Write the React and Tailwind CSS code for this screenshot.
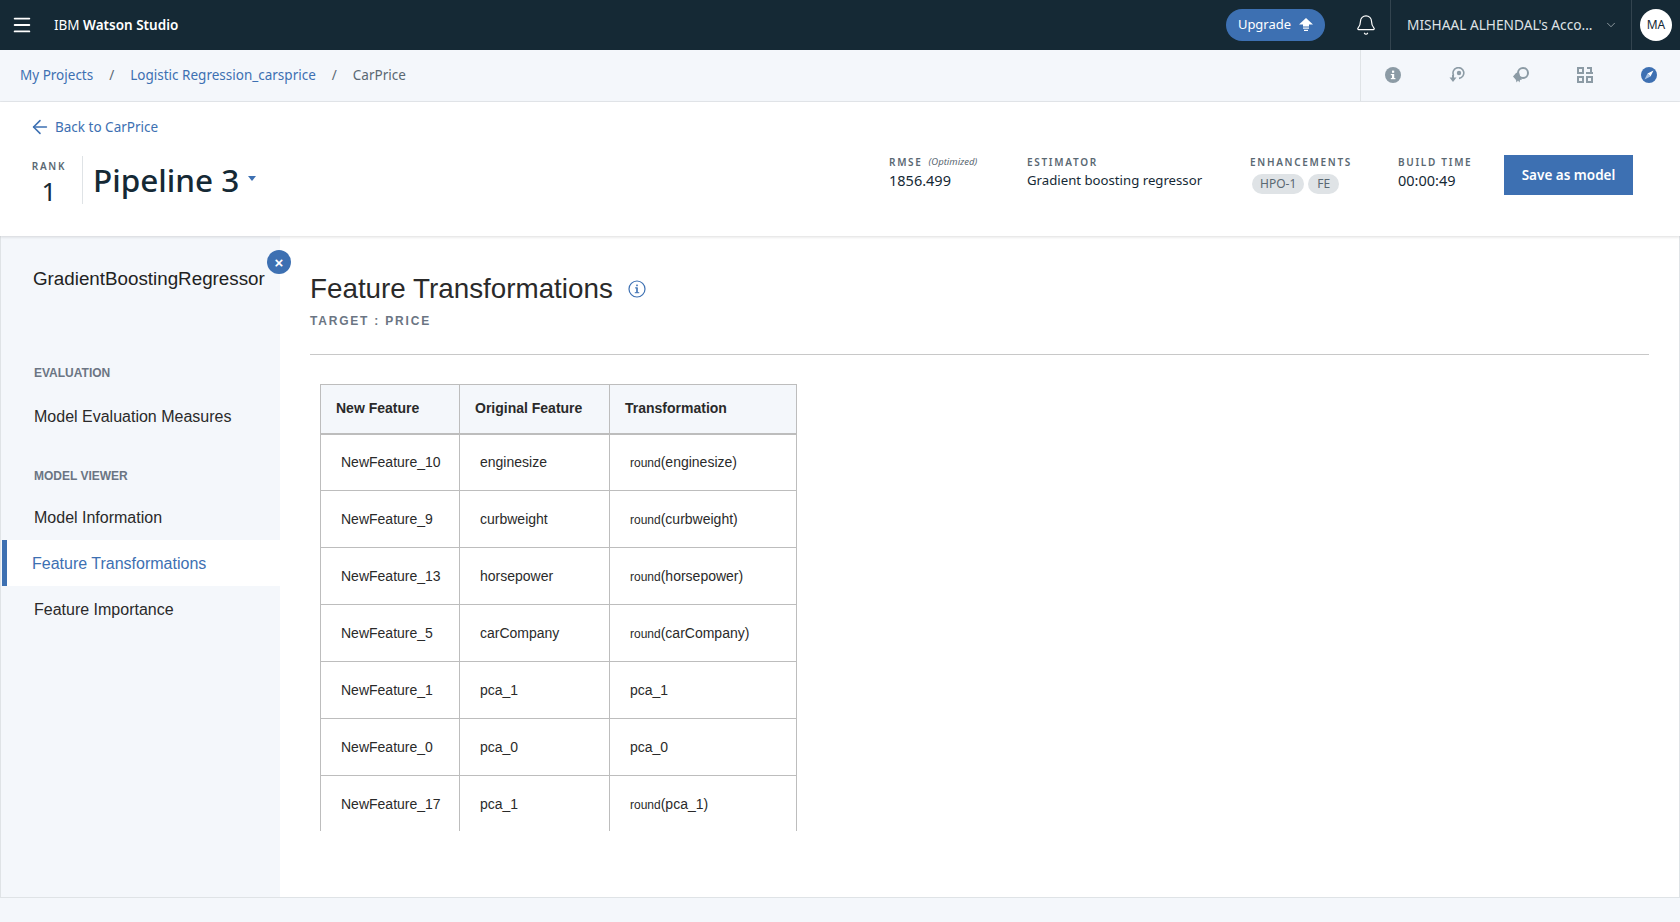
import { ArrowLeft, ChevronDown, Bell, Menu } from 'lucide-react'

const rows = [
    ['NewFeature_10', 'enginesize', 'round', '(enginesize)'],
    ['NewFeature_9', 'curbweight', 'round', '(curbweight)'],
    ['NewFeature_13', 'horsepower', 'round', '(horsepower)'],
    ['NewFeature_5', 'carCompany', 'round', '(carCompany)'],
    ['NewFeature_1', 'pca_1', '', 'pca_1'],
    ['NewFeature_0', 'pca_0', '', 'pca_0'],
    ['NewFeature_17', 'pca_1', 'round', '(pca_1)'],
]

const plex = 'font-["Noto_Sans",sans-serif]'
const helv = 'font-["Liberation_Sans",Arial,sans-serif]'

const ToolIcon = ({ children }) => (
    <svg viewBox="0 0 16 16" className="h-4 w-4">
        {children}
    </svg>
)

const Stat = ({ label, note, className, children }) => (
    <div className={`flex flex-col ${className}`}>
        <div className="flex h-[14px] items-center text-[10px] font-semibold tracking-[0.17em] text-[#5a6872]">
            {label}
            {note && (
                <span className="ml-1.5 text-[9.5px] font-normal italic tracking-normal">
                    {note}
                </span>
            )}
        </div>
        {children}
    </div>
)

const SideItem = ({ children }) => (
    <div className="flex h-[46px] items-center pt-[2px] pl-[33px] text-[16px] text-[#2a2a2a]">
        {children}
    </div>
)

export default function App() {
    return (
        <div className={`${plex} flex h-[922px] w-[1680px] flex-col overflow-hidden bg-[#f4f7fb]`}>
            {/* top bar */}
            <div className="flex h-[50px] shrink-0 items-center bg-[#152935] text-white">
                <Menu className="ml-[11px] h-[22px] w-[22px]" strokeWidth={2} />
                <div className="ml-[21px] text-[13.5px]">
                    IBM <span className="font-semibold">Watson Studio</span>
                </div>
                <div className="ml-auto flex h-8 w-[99px] items-center justify-center gap-2 rounded-full bg-[#3d70b2] text-[13px]">
                    Upgrade
                    <svg viewBox="0 0 14 14" className="h-[14px] w-[14px]" fill="white">
                        <path d="M7 0 14 6.5H10V8.5H4V6.5H0Z" />
                        <rect x="4" y="9.5" width="6" height="1.2" />
                        <rect x="5" y="11.8" width="4" height="1.2" />
                    </svg>
                </div>
                <div className="flex w-[65px] justify-end pr-[13px]">
                    <Bell className="h-[22px] w-[22px]" strokeWidth={1.3} />
                </div>
                <div className="flex h-full w-[242px] items-center border-x border-[#33444f] pl-4 text-[13.7px] text-[#dfe3e6]">
                    MISHAAL ALHENDAL's Acco...
                    <ChevronDown className="ml-[11px] h-[14px] w-[14px]" strokeWidth={1} />
                </div>
                <div className="flex w-[48px] justify-center">
                    <div className="flex h-8 w-8 items-center justify-center rounded-full bg-white text-[12px] text-[#152935]">
                        MA
                    </div>
                </div>
            </div>

            {/* breadcrumb */}
            <div className="z-10 flex h-[52px] shrink-0 items-center border-b border-[#e6e9ed] bg-[#f4f7fb] text-[13.5px]">
                <div className="flex flex-1 items-center pl-5 text-[#3d70b2]">
                    <span>My Projects</span>
                    <span className="mx-4 text-[#5a6872]">/</span>
                    <span>Logistic Regression_carsprice</span>
                    <span className="mx-4 text-[#5a6872]">/</span>
                    <span className="text-[#5a6872]">CarPrice</span>
                </div>
                <div className="flex h-full w-[320px] items-center justify-between border-l border-[#dfe3e6] pr-[23px] pb-[2px] pl-[24px]">
                    <ToolIcon>
                        <circle cx="8" cy="8" r="8" fill="#8c9ba5" />
                        <rect x="7" y="7" width="2.2" height="5" fill="white" />
                        <rect x="5.8" y="7" width="2" height="1.2" fill="white" />
                        <rect x="5.8" y="11" width="4.6" height="1.2" fill="white" />
                        <rect x="7" y="3.6" width="2.2" height="2.2" fill="white" />
                    </ToolIcon>
                    <ToolIcon>
                        <path d="M4.6 8.5A5.4 5.4 0 1 1 10 11.4" fill="none" stroke="#8c9ba5" strokeWidth="1.6" />
                        <circle cx="10" cy="6" r="2.2" fill="#8c9ba5" />
                        <path d="M0.5 10.5H7.5L4 15Z" fill="#8c9ba5" />
                        <rect x="3" y="8" width="2" height="3" fill="#8c9ba5" />
                    </ToolIcon>
                    <ToolIcon>
                        <circle cx="10" cy="6" r="5" fill="none" stroke="#8c9ba5" strokeWidth="2" />
                        <path d="M0 9.5 3 6 6 5 7 9 9 12.5 7 13 6.5 15.5 5 13.5 3.5 15.5 3 13Z" fill="#8c9ba5" />
                    </ToolIcon>
                    <ToolIcon>
                        <path
                            fillRule="evenodd"
                            d="M0 0h7v7H0ZM2 2v3h3V2ZM0 9h7v7H0ZM2 11v3h3v-3ZM9 9h7v7H9ZM11 11v3h3v-3Z"
                            fill="#8c9ba5"
                        />
                        <rect x="10" y="0" width="5" height="2" fill="#8c9ba5" />
                        <rect x="13" y="0" width="2" height="7" fill="#8c9ba5" />
                        <rect x="9" y="5" width="7" height="2" fill="#8c9ba5" />
                    </ToolIcon>
                    <ToolIcon>
                        <circle cx="8" cy="8" r="8" fill="#3d70b2" />
                        <path d="M12.5 3.5 9.5 9.5 6.5 6.5Z" fill="white" />
                        <path d="M3.5 12.5 6.5 6.5 9.5 9.5Z" fill="#a9c4e6" />
                    </ToolIcon>
                </div>
            </div>

            {/* pipeline header */}
            <div className="z-10 flex h-[134px] shrink-0 flex-col bg-white shadow-[0_1px_3px_rgba(0,0,0,0.14)]">
                <div className="mt-[14px] flex items-center pl-[30px] text-[13.5px] text-[#3d70b2]">
                    <ArrowLeft className="-ml-[1px] h-[22px] w-[22px]" strokeWidth={1.7} />
                    <span className="ml-[4px]">Back to CarPrice</span>
                </div>
                <div className="mt-[18px] flex items-start">
                    <div className="flex h-[48px] w-[83px] flex-col items-center border-r border-[#dfe3e6] pl-[18px] pr-[2px] pt-[5px]">
                        <span className="text-[10px] font-semibold leading-none tracking-[0.17em] text-[#5a6872]">RANK</span>
                        <span className="mt-[7px] text-[26px] leading-none text-[#152935]">1</span>
                    </div>
                    <div className="ml-[10px] flex h-[48px] items-center text-[31.5px] font-medium text-[#152935]">
                        Pipeline 3
                        <span className="ml-[9px] mb-[3px] h-0 w-0 border-x-[4px] border-t-[5px] border-x-transparent border-t-[#3d70b2]" />
                    </div>
                    <div className="ml-auto mr-[47px] -mt-[1px] flex items-start">
                        <Stat label="RMSE" note="(Optimized)" className="w-[138px]">
                            <span className="mt-[1px] text-[14.5px] text-[#152935]">1856.499</span>
                        </Stat>
                        <Stat label="ESTIMATOR" className="w-[223px]">
                            <span className="mt-[1px] text-[13.2px] leading-[21px] text-[#152935]">Gradient boosting regressor</span>
                        </Stat>
                        <Stat label="ENHANCEMENTS" className="w-[148px]">
                            <div className="mt-[5px] ml-[2px] flex gap-[4px] text-[12px] text-[#5a6872]">
                                <span className="flex h-5 items-center rounded-full bg-[#dfe3e6] px-[8px]">HPO-1</span>
                                <span className="flex h-5 items-center rounded-full bg-[#dfe3e6] px-[9px]">FE</span>
                            </div>
                        </Stat>
                        <Stat label="BUILD TIME" className="w-[106px]">
                            <span className="mt-[1px] text-[14.5px] text-[#152935]">00:00:49</span>
                        </Stat>
                        <div className="flex h-10 w-[129px] items-center justify-center bg-[#3d70b2] text-[13.5px] font-semibold text-white">
                            Save as model
                        </div>
                    </div>
                </div>
            </div>

            {/* body */}
            <div className={`${helv} flex h-[662px] shrink-0 border-x border-b border-[#dfe3e6] bg-white`}>
                <div className="relative flex w-[279px] shrink-0 flex-col bg-[#f4f7fb]">
                    <div className="mt-[30px] pl-[32px] text-[18.8px] leading-[26px] text-[#222]">GradientBoostingRegressor</div>
                    <button className="absolute top-[14px] -right-[11px] flex h-6 w-6 items-center justify-center rounded-full bg-[#3d70b2] text-[15px] font-bold leading-none text-white">
                        ×
                    </button>
                    <div className="mt-[72px] pl-[33px] text-[12px] font-bold text-[#6b7583]">EVALUATION</div>
                    <div className="mt-[11px]">
                        <SideItem>Model Evaluation Measures</SideItem>
                    </div>
                    <div className="mt-[28px] pl-[33px] text-[12px] font-bold text-[#6b7583]">MODEL VIEWER</div>
                    <div className="mt-[9px]">
                        <SideItem>Model Information</SideItem>
                        <div className="ml-[1px] flex h-[46px] items-center border-l-[5px] border-[#3d70b2] bg-white pt-[2px] pl-[25px] text-[16px] text-[#3d70b2]">
                            Feature Transformations
                        </div>
                        <SideItem>Feature Importance</SideItem>
                    </div>
                </div>

                <div className="flex min-w-0 flex-1 flex-col pl-[30px] pr-[30px]">
                    <div className="mt-[35px] flex items-center">
                        <h1 className="text-[27.8px] leading-[36px] text-[#2a2a2a]">Feature Transformations</h1>
                        <svg viewBox="0 0 18 18" className="ml-[15px] h-[18px] w-[18px]" fill="none">
                            <circle cx="9" cy="9" r="8" stroke="#3d70b2" strokeWidth="1.2" />
                            <rect x="8.2" y="7.6" width="1.6" height="5" fill="#3d70b2" />
                            <rect x="6.8" y="12.2" width="4.4" height="1" fill="#3d70b2" />
                            <rect x="7" y="7.4" width="2.4" height="1" fill="#3d70b2" />
                            <rect x="8.2" y="4.6" width="1.6" height="1.6" fill="#3d70b2" />
                        </svg>
                    </div>
                    <div className="mt-[5px] text-[12px] font-bold tracking-[0.15em] text-[#6b7583]">TARGET : PRICE</div>
                    <div className="mt-[24px] border-t border-[#c8c8c8]" />
                    <div className="mt-[29px] ml-[10px] h-[447px] w-[477px] overflow-hidden">
                        <table className="w-[477px] table-fixed border-collapse text-[14px] text-[#2a2a2a]">
                            <thead>
                                <tr className="h-[49px] bg-[#f4f7fb]">
                                    <th className="w-[139px] border border-b-2 border-[#bdbdbd] pl-[15px] text-left font-bold">New Feature</th>
                                    <th className="w-[150px] border border-b-2 border-[#bdbdbd] pl-[15px] text-left font-bold">Original Feature</th>
                                    <th className="border border-b-2 border-[#bdbdbd] pl-[15px] text-left font-bold">Transformation</th>
                                </tr>
                            </thead>
                            <tbody>
                                {rows.map((row) => (
                                    <tr key={row[0]} className="h-[57px]">
                                        <td className="border border-[#bdbdbd] pl-[20px]">{row[0]}</td>
                                        <td className="border border-[#bdbdbd] pl-[20px]">{row[1]}</td>
                                        <td className="border border-[#bdbdbd] pl-[20px]">
                                            {row[2] && <span className="text-[12px]">{row[2]}</span>}
                                            {row[3]}
                                        </td>
                                    </tr>
                                ))}
                            </tbody>
                        </table>
                    </div>
                </div>
            </div>
        </div>
    )
}
